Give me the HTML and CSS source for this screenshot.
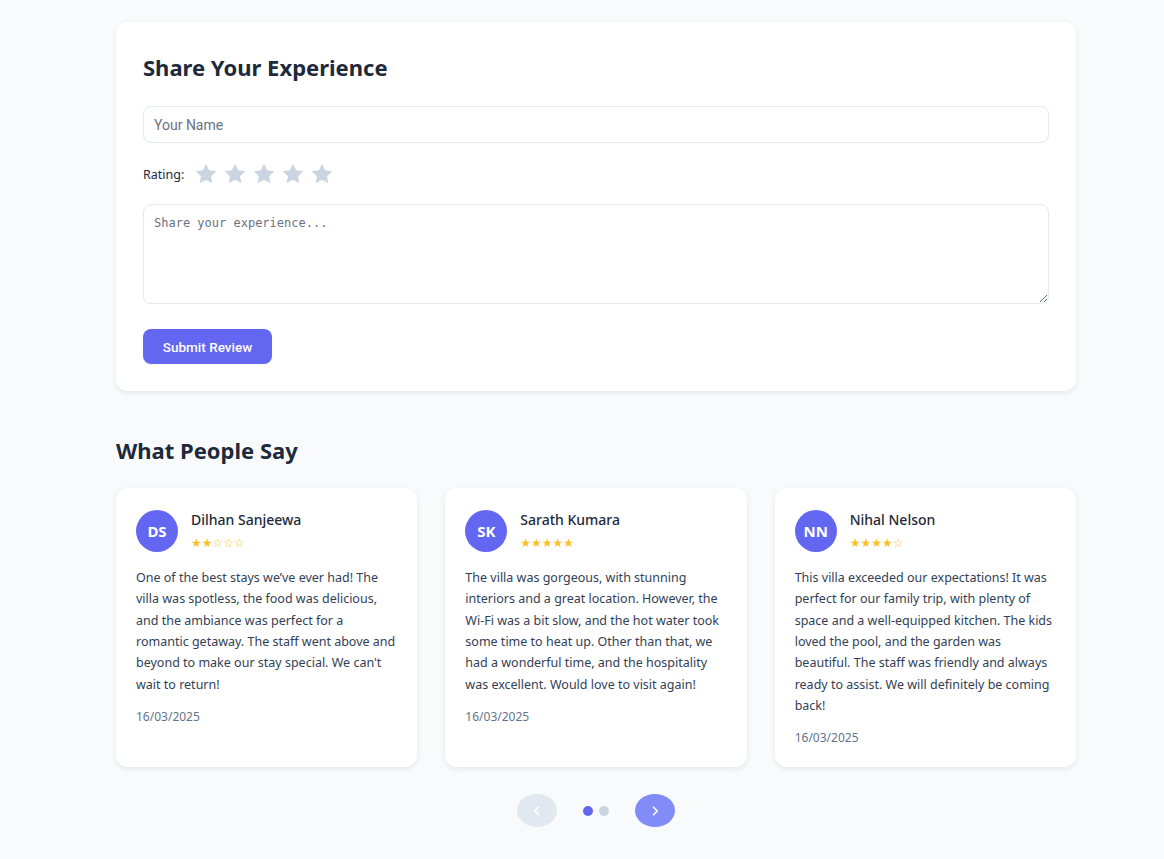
FILE: index.html
```html
<!DOCTYPE html>
<html lang="en">
<head>
<meta charset="utf-8">
<title>Reviews</title>
<link rel="stylesheet" href="styles.css">
</head>
<body>
<main class="page">
  <section class="form-card">
    <h2 class="form-title">Share Your Experience</h2>
    <input class="name-input" type="text" placeholder="Your Name">
    <div class="rating-row">
      <span class="rating-label">Rating:</span>
      <div class="rating-stars">
        <svg viewBox="0 0 24 24" class="rstar"><path d="M12 2.5l2.9 6.1 6.6.8-4.9 4.6 1.3 6.6L12 17.3l-5.9 3.3 1.3-6.6-4.9-4.6 6.6-.8z"/></svg>
        <svg viewBox="0 0 24 24" class="rstar"><path d="M12 2.5l2.9 6.1 6.6.8-4.9 4.6 1.3 6.6L12 17.3l-5.9 3.3 1.3-6.6-4.9-4.6 6.6-.8z"/></svg>
        <svg viewBox="0 0 24 24" class="rstar"><path d="M12 2.5l2.9 6.1 6.6.8-4.9 4.6 1.3 6.6L12 17.3l-5.9 3.3 1.3-6.6-4.9-4.6 6.6-.8z"/></svg>
        <svg viewBox="0 0 24 24" class="rstar"><path d="M12 2.5l2.9 6.1 6.6.8-4.9 4.6 1.3 6.6L12 17.3l-5.9 3.3 1.3-6.6-4.9-4.6 6.6-.8z"/></svg>
        <svg viewBox="0 0 24 24" class="rstar"><path d="M12 2.5l2.9 6.1 6.6.8-4.9 4.6 1.3 6.6L12 17.3l-5.9 3.3 1.3-6.6-4.9-4.6 6.6-.8z"/></svg>
      </div>
    </div>
    <textarea class="exp-input" placeholder="Share your experience..."></textarea>
    <button class="submit-btn" type="button">Submit Review</button>
  </section>

  <section class="reviews">
    <h2 class="reviews-title">What People Say</h2>
    <div class="review-grid">
      <article class="review-card">
        <div class="review-head">
          <div class="avatar">DS</div>
          <div class="who">
            <div class="name">Dilhan Sanjeewa</div>
            <div class="stars">★★☆☆☆</div>
          </div>
        </div>
        <p class="review-text">One of the best stays we’ve ever had! The villa was spotless, the food was delicious, and the ambiance was perfect for a romantic getaway. The staff went above and beyond to make our stay special. We can't wait to return!</p>
        <div class="date">16/03/2025</div>
      </article>
      <article class="review-card">
        <div class="review-head">
          <div class="avatar">SK</div>
          <div class="who">
            <div class="name">Sarath Kumara</div>
            <div class="stars">★★★★★</div>
          </div>
        </div>
        <p class="review-text">The villa was gorgeous, with stunning interiors and a great location. However, the Wi-Fi was a bit slow, and the hot water took some time to heat up. Other than that, we had a wonderful time, and the hospitality was excellent. Would love to visit again!</p>
        <div class="date">16/03/2025</div>
      </article>
      <article class="review-card">
        <div class="review-head">
          <div class="avatar">NN</div>
          <div class="who">
            <div class="name">Nihal Nelson</div>
            <div class="stars">★★★★☆</div>
          </div>
        </div>
        <p class="review-text">This villa exceeded our expectations! It was perfect for our family trip, with plenty of space and a well-equipped kitchen. The kids loved the pool, and the garden was beautiful. The staff was friendly and always ready to assist. We will definitely be coming back!</p>
        <div class="date">16/03/2025</div>
      </article>
    </div>
    <div class="pager">
      <button class="pbtn prev" type="button" aria-label="Previous">
        <svg viewBox="0 0 24 24"><polyline points="14,7 9,12 14,17"/></svg>
      </button>
      <div class="dots"><span class="dot active"></span><span class="dot"></span></div>
      <button class="pbtn next" type="button" aria-label="Next">
        <svg viewBox="0 0 24 24"><polyline points="10,7 15,12 10,17"/></svg>
      </button>
    </div>
  </section>
</main>
</body>
</html>
```
FILE: styles.css
```css
* { box-sizing: border-box; }
html, body { margin: 0; padding: 0; }
body {
  background: #f8fafc;
  font-family: "Noto Sans", "Open Sans", sans-serif;
  color: #1e293b;
}
.page {
  width: 960px;
  margin: 0 0 0 116px;
  padding: 22px 0 32px;
}
.form-card {
  background: #fff;
  border-radius: 12px;
  box-shadow: 0 2px 6px rgba(15, 23, 42, 0.08);
  padding: 27px 27px 27px;
  display: flex;
  flex-direction: column;
  align-items: flex-start;
}
.form-title {
  margin: 4px 0 25px;
  font-size: 22px;
  font-weight: 700;
  line-height: 28px;
  color: #1e293b;
}
.name-input {
  width: 100%;
  height: 37px;
  border: 1px solid #e2e8f0;
  border-radius: 8px;
  padding: 0 10px;
  font-family: Roboto, sans-serif;
  font-size: 14px;
  color: #1e293b;
  outline: none;
}
.name-input::placeholder { color: #6b7280; }
.rating-row {
  display: flex;
  align-items: center;
  margin: 18px 0 17px;
  gap: 9px;
}
.rating-label {
  font-size: 12.5px;
  color: #1e293b;
  font-family: "Noto Sans", sans-serif;
}
.rating-stars { display: flex; gap: 3px; }
.rstar { width: 26px; height: 26px; fill: #cbd5e1; }
.exp-input {
  width: 100%;
  height: 100px;
  border: 1px solid #e2e8f0;
  border-radius: 8px;
  padding: 11px 10px;
  font-family: "DejaVu Sans Mono", monospace;
  font-size: 12px;
  resize: vertical;
  outline: none;
  display: block;
}
.exp-input::placeholder { color: #6b7280; }
.submit-btn {
  margin-top: 25px;
  width: 129px;
  height: 35px;
  border: none;
  border-radius: 8px;
  background: #6366f1;
  color: #fff;
  font-family: Roboto, sans-serif;
  font-size: 13.5px;
  font-weight: 500;
  cursor: pointer;
}
.reviews { margin-top: 44px; }
.reviews-title {
  margin: 0 0 23px;
  font-size: 22px;
  line-height: 30px;
  font-weight: 700;
  color: #1e293b;
}
.review-grid {
  display: grid;
  grid-template-columns: repeat(3, 1fr);
  gap: 28px;
}
.review-card {
  background: #fff;
  border-radius: 12px;
  box-shadow: 0 2px 6px rgba(15, 23, 42, 0.08);
  padding: 22px 20px 21px;
}
.review-head { display: flex; align-items: flex-start; gap: 13px; }
.avatar {
  width: 42px;
  height: 42px;
  border-radius: 50%;
  background: #6366f1;
  color: #fff;
  font-weight: 700;
  font-size: 15px;
  display: flex;
  align-items: center;
  justify-content: center;
  flex: none;
}
.name {
  font-size: 14px;
  font-weight: 500;
  line-height: 20px;
  color: #1e293b;
}
.stars {
  margin-top: 6px;
  font-size: 12px;
  line-height: 14px;
  color: #fbbf24;
  font-family: "DejaVu Sans", sans-serif;
}
.review-text {
  margin: 15px 0 0;
  font-size: 12.5px;
  line-height: 21.33px;
  color: #334155;
}
.date {
  margin-top: 14px;
  font-size: 12px;
  line-height: 16px;
  color: #64748b;
}
.pager {
  display: flex;
  justify-content: center;
  align-items: center;
  gap: 26px;
  margin-top: 27px;
}
.pbtn {
  width: 40px;
  height: 33px;
  border-radius: 50%;
  border: none;
  padding: 0;
  display: flex;
  align-items: center;
  justify-content: center;
  cursor: pointer;
}
.pbtn svg { width: 18px; height: 18px; fill: none; stroke: #fff; stroke-width: 2.2; stroke-linecap: round; stroke-linejoin: round; }
.pbtn.prev { background: #e2e8f0; }
.pbtn.next { background: #818cf8; }
.dots { display: flex; gap: 6px; }
.dot { width: 10px; height: 10px; border-radius: 50%; background: #cbd5e1; }
.dot.active { background: #6366f1; }
```
